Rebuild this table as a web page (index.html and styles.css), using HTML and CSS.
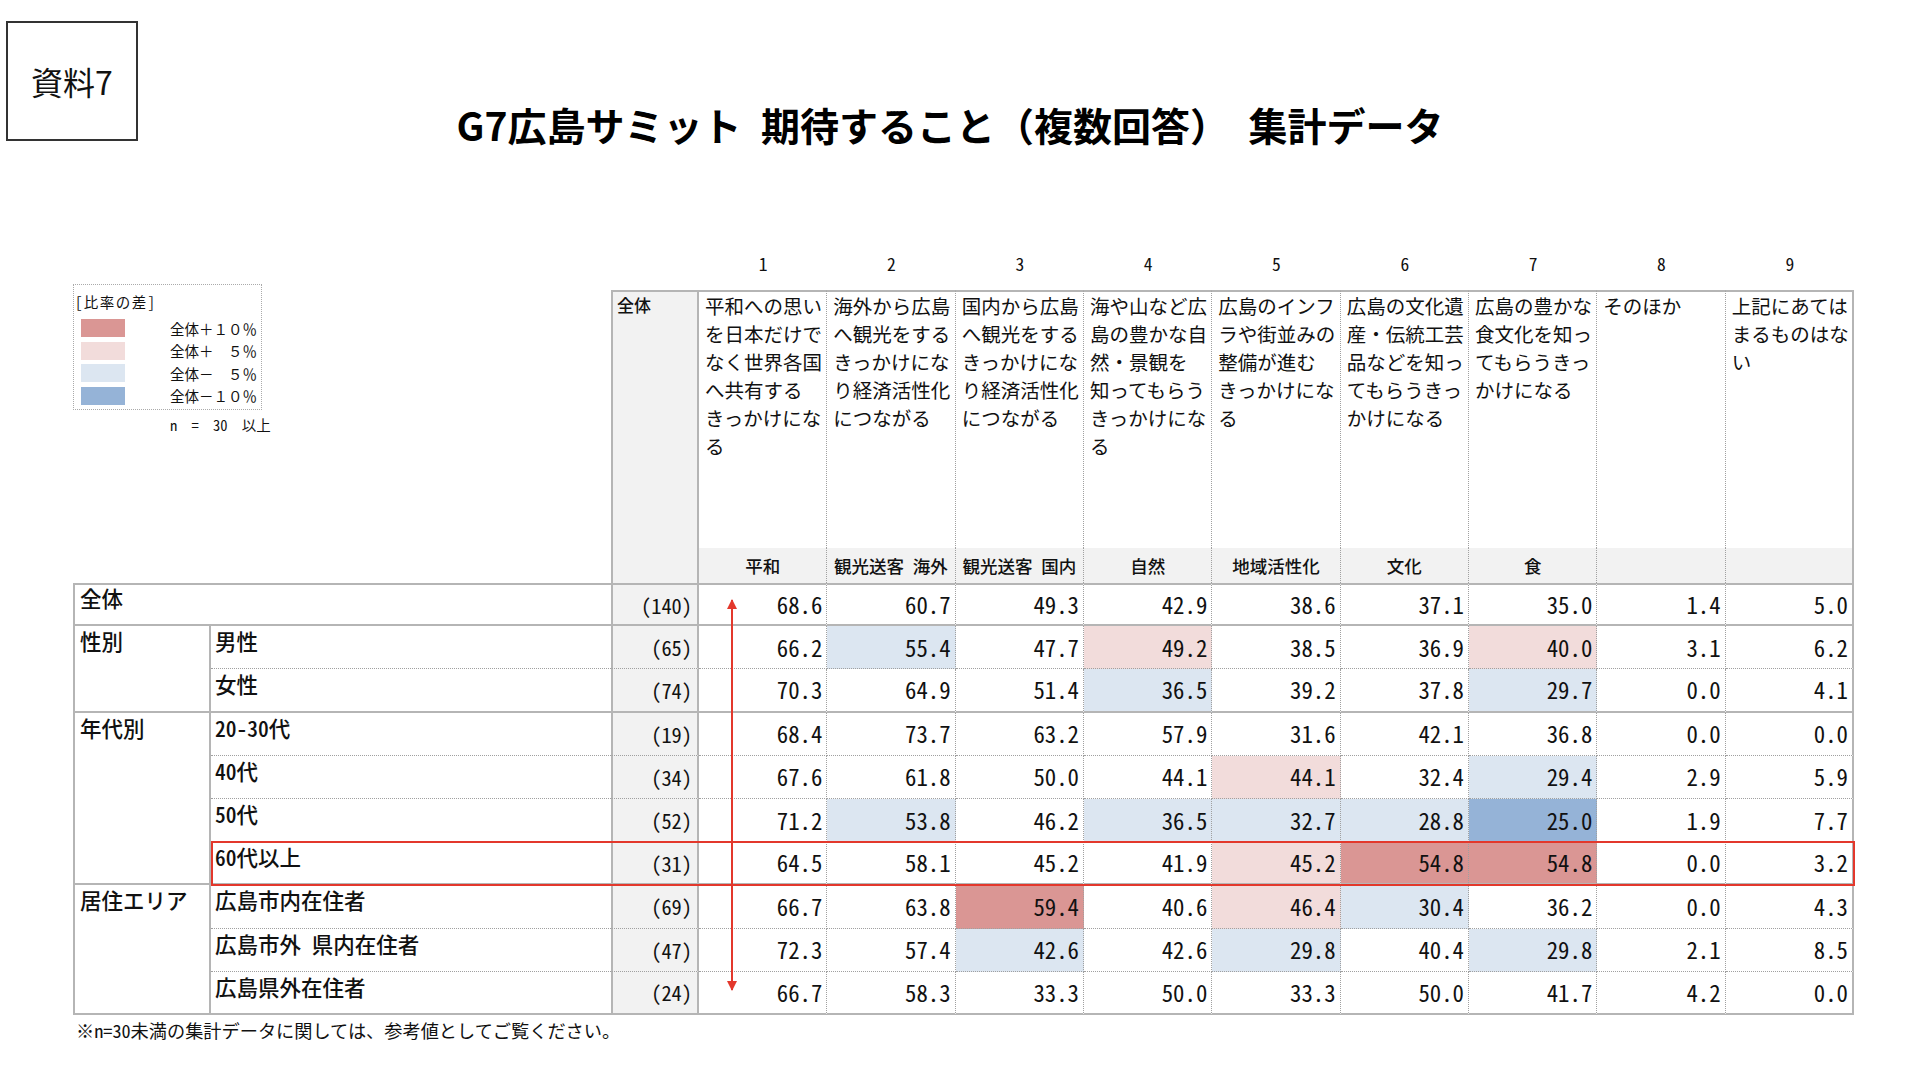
FILE: index.html
```html
<!DOCTYPE html>
<html lang="ja">
<head>
<meta charset="utf-8">
<title>G7広島サミット 期待すること（複数回答） 集計データ</title>
<link rel="stylesheet" href="styles.css">
</head>
<body>
<header class="top">
  <div class="doc-tag">資料7</div>
  <h1 class="title">G7広島サミット&ensp;期待すること（複数回答）&ensp;集計データ</h1>
</header>

<div class="sheet">
  <div class="legend-area">
    <div class="legend">
      <div class="legend-title">[比率の差]</div>
      <ul class="legend-list">
        <li><span class="sw p10"></span>全体＋１０％</li>
        <li><span class="sw p5"></span>全体＋　５％</li>
        <li><span class="sw m5"></span>全体－　５％</li>
        <li><span class="sw m10"></span>全体－１０％</li>
      </ul>
    </div>
    <div class="legend-n">n = 30 以上</div>
  </div>
  <div class="blank"></div>
  <div class="num">1</div><div class="num">2</div><div class="num">3</div><div class="num">4</div><div class="num">5</div><div class="num">6</div><div class="num">7</div><div class="num">8</div><div class="num">9</div>

  <div class="h-total">全体</div>
  <div class="hq">平和への思い<br>を日本だけで<br>なく世界各国<br>へ共有する<br>きっかけにな<br>る</div>
  <div class="hq">海外から広島<br>へ観光をする<br>きっかけにな<br>り経済活性化<br>につながる</div>
  <div class="hq">国内から広島<br>へ観光をする<br>きっかけにな<br>り経済活性化<br>につながる</div>
  <div class="hq">海や山など広<br>島の豊かな自<br>然・景観を<br>知ってもらう<br>きっかけにな<br>る</div>
  <div class="hq">広島のインフ<br>ラや街並みの<br>整備が進む<br>きっかけにな<br>る</div>
  <div class="hq">広島の文化遺<br>産・伝統工芸<br>品などを知っ<br>てもらうきっ<br>かけになる</div>
  <div class="hq">広島の豊かな<br>食文化を知っ<br>てもらうきっ<br>かけになる</div>
  <div class="hq">そのほか</div>
  <div class="hq last">上記にあては<br>まるものはな<br>い</div>

  <div class="hs">平和</div>
  <div class="hs">観光送客&ensp;海外</div>
  <div class="hs">観光送客&ensp;国内</div>
  <div class="hs">自然</div>
  <div class="hs">地域活性化</div>
  <div class="hs">文化</div>
  <div class="hs">食</div>
  <div class="hs"></div>
  <div class="hs last"></div>

  <div class="row first end">
    <div class="lbl all">全体</div><div class="n">(140)</div>
    <div class="v">68.6</div><div class="v">60.7</div><div class="v">49.3</div><div class="v">42.9</div><div class="v">38.6</div><div class="v">37.1</div><div class="v">35.0</div><div class="v">1.4</div><div class="v">5.0</div>
  </div>

  <div class="row">
    <div class="cat s2">性別</div><div class="lbl">男性</div><div class="n">(65)</div>
    <div class="v">66.2</div><div class="v m5">55.4</div><div class="v">47.7</div><div class="v p5">49.2</div><div class="v">38.5</div><div class="v">36.9</div><div class="v p5">40.0</div><div class="v">3.1</div><div class="v">6.2</div>
  </div>
  <div class="row end">
    <div class="lbl">女性</div><div class="n">(74)</div>
    <div class="v">70.3</div><div class="v">64.9</div><div class="v">51.4</div><div class="v m5">36.5</div><div class="v">39.2</div><div class="v">37.8</div><div class="v m5">29.7</div><div class="v">0.0</div><div class="v">4.1</div>
  </div>

  <div class="row">
    <div class="cat s4">年代別</div><div class="lbl">20-30代</div><div class="n">(19)</div>
    <div class="v">68.4</div><div class="v">73.7</div><div class="v">63.2</div><div class="v">57.9</div><div class="v">31.6</div><div class="v">42.1</div><div class="v">36.8</div><div class="v">0.0</div><div class="v">0.0</div>
  </div>
  <div class="row">
    <div class="lbl">40代</div><div class="n">(34)</div>
    <div class="v">67.6</div><div class="v">61.8</div><div class="v">50.0</div><div class="v">44.1</div><div class="v p5">44.1</div><div class="v">32.4</div><div class="v m5">29.4</div><div class="v">2.9</div><div class="v">5.9</div>
  </div>
  <div class="row">
    <div class="lbl">50代</div><div class="n">(52)</div>
    <div class="v">71.2</div><div class="v m5">53.8</div><div class="v">46.2</div><div class="v m5">36.5</div><div class="v m5">32.7</div><div class="v m5">28.8</div><div class="v m10">25.0</div><div class="v">1.9</div><div class="v">7.7</div>
  </div>
  <div class="row end">
    <div class="lbl">60代以上</div><div class="n">(31)</div>
    <div class="v">64.5</div><div class="v">58.1</div><div class="v">45.2</div><div class="v">41.9</div><div class="v p5">45.2</div><div class="v p10">54.8</div><div class="v p10">54.8</div><div class="v">0.0</div><div class="v">3.2</div>
  </div>

  <div class="row">
    <div class="cat s3">居住エリア</div><div class="lbl">広島市内在住者</div><div class="n">(69)</div>
    <div class="v">66.7</div><div class="v">63.8</div><div class="v p10">59.4</div><div class="v">40.6</div><div class="v p5">46.4</div><div class="v m5">30.4</div><div class="v">36.2</div><div class="v">0.0</div><div class="v">4.3</div>
  </div>
  <div class="row">
    <div class="lbl">広島市外　県内在住者</div><div class="n">(47)</div>
    <div class="v">72.3</div><div class="v">57.4</div><div class="v m5">42.6</div><div class="v">42.6</div><div class="v m5">29.8</div><div class="v">40.4</div><div class="v m5">29.8</div><div class="v">2.1</div><div class="v">8.5</div>
  </div>
  <div class="row end">
    <div class="lbl">広島県外在住者</div><div class="n">(24)</div>
    <div class="v">66.7</div><div class="v">58.3</div><div class="v">33.3</div><div class="v">50.0</div><div class="v">33.3</div><div class="v">50.0</div><div class="v">41.7</div><div class="v">4.2</div><div class="v">0.0</div>
  </div>

  <div class="hl"></div>
  <div class="arrow"></div>
</div>

<p class="note">※n=30未満の集計データに関しては、参考値としてご覧ください。</p>
</body>
</html>
```

FILE: styles.css
```css
:root {
  --solid: 2px solid #b5b5b5;
  --dot: 1px dotted #a0a0a0;
  --gray: #f2f2f2;
  --jp: "Noto Sans CJK JP", "Noto Sans", sans-serif;
  --mono: "Noto Sans Mono CJK JP", "Noto Sans CJK JP", monospace;
}

html, body {
  margin: 0;
  background: #fff;
}

body {
  width: 1920px;
  height: 1080px;
  overflow: hidden;
  color: #111;
  font-family: var(--jp);
}

/* ---------- top ---------- */
.top {
  display: flex;
  align-items: flex-start;
  height: 250px;
  box-sizing: border-box;
  padding: 21px 0 0 6px;
}

.doc-tag {
  width: 132px;
  height: 120px;
  box-sizing: border-box;
  border: 2px solid #333;
  display: flex;
  align-items: center;
  justify-content: center;
  font-size: 32px;
  font-weight: 400;
}

.title {
  width: 1624px;
  margin: 79px 0 0;
  text-align: center;
  font-size: 39px;
  line-height: 48px;
  font-weight: 700;
  color: #000;
  white-space: nowrap;
}

/* ---------- sheet grid ---------- */
.sheet {
  position: relative;
  display: grid;
  margin-left: 73px;
  width: 1781px;
  grid-template-columns: 138px 400px 88px repeat(9, 128.333px);
  grid-template-rows: 40px 258px 35px repeat(10, 43.2px);
}

.sheet > div,
.row > div {
  box-sizing: border-box;
  min-width: 0;
}

.row {
  display: contents;
}

/* legend */
.legend-area {
  grid-column: span 2;
  grid-row: span 3;
  padding-top: 34px;
}

.legend {
  width: 189px;
  box-sizing: border-box;
  border: 1px dotted #aaa;
  padding: 8px 0 2px 1px;
  font-size: 14.5px;
}

.legend-title {
  line-height: 18px;
  letter-spacing: 1.5px;
  font-feature-settings: "hwid" 1;
}

.legend-list {
  list-style: none;
  margin: 6px 0 0;
  padding: 0 0 0 6px;
}

.legend-list li {
  display: flex;
  align-items: center;
  height: 22.5px;
}

.sw {
  width: 44px;
  height: 18px;
  margin-right: 45px;
}

.legend-n {
  margin: 6px 0 0 97px;
  font-size: 14.5px;
  line-height: 18px;
  word-spacing: 7px;
  font-feature-settings: "hwid" 1;
}

/* colour scale */
.p10 { background: #da9694; }
.p5 { background: #f2dcdb; }
.m5 { background: #dce6f1; }
.m10 { background: #95b3d7; }

/* header rows */
.num {
  text-align: center;
  padding-top: 3px;
  font-family: var(--mono);
  font-feature-settings: "hwid" 1;
  font-size: 17.5px;
  line-height: 22px;
}

.h-total {
  grid-row: span 2;
  background: var(--gray);
  border-top: var(--solid);
  border-left: var(--solid);
  border-right: var(--solid);
  padding: 2px 4px;
  font-size: 17px;
  line-height: 22px;
  font-weight: 500;
}

.hq {
  border-top: var(--solid);
  border-right: var(--dot);
  padding: 0 2px 0 6px;
  font-size: 19.5px;
  line-height: 27.9px;
  white-space: nowrap;
}

.hs {
  background: var(--gray);
  border-right: var(--dot);
  text-align: center;
  font-size: 17.5px;
  line-height: 35px;
  font-weight: 500;
  white-space: nowrap;
}

.hq.last,
.hs.last {
  border-right: var(--solid);
}

/* body rows */
.cat,
.lbl {
  padding: 2px 5px 0;
  font-size: 21.5px;
  line-height: 26px;
  font-weight: 500;
  white-space: nowrap;
  font-feature-settings: "hwid" 1;
}

.cat {
  border-left: var(--solid);
  border-right: var(--solid);
}

.cat.s2 { grid-row: span 2; }
.cat.s3 { grid-row: span 3; }
.cat.s4 { grid-row: span 4; }

.lbl {
  padding-left: 4px;
  border-bottom: var(--dot);
}

.lbl.all {
  grid-column: span 2;
  border-left: var(--solid);
  padding-left: 5px;
}

.n,
.v {
  display: flex;
  align-items: center;
  justify-content: flex-end;
  font-family: var(--mono);
  font-feature-settings: "hwid" 1;
  border-bottom: var(--dot);
  white-space: nowrap;
}

.n {
  background: var(--gray);
  border-left: var(--solid);
  border-right: var(--solid);
  padding-right: 5px;
  font-size: 20.4px;
}

.v {
  border-right: var(--dot);
  padding-right: 4px;
  font-size: 22.8px;
}

.row > div:last-child {
  border-right: var(--solid);
}

.row.first > div {
  border-top: var(--solid);
}

.row.first > .lbl {
  padding-top: 0;
}

.row.end > div,
.sheet .row > .cat {
  border-bottom: var(--solid);
}

/* annotations drawn over the table */
.hl {
  position: absolute;
  grid-row: 10 / 11;
  grid-column: 2 / -1;
  top: -1px;
  bottom: -1px;
  left: 0;
  right: -1px;
  border: 2px solid #e3382c;
  pointer-events: none;
}

.arrow {
  position: absolute;
  grid-column: 4 / 5;
  grid-row: 4 / 14;
  left: 32px;
  top: 17px;
  bottom: 25px;
  width: 2px;
  background: #e3382c;
}

.arrow::before,
.arrow::after {
  content: "";
  position: absolute;
  left: -4px;
  border-left: 5px solid transparent;
  border-right: 5px solid transparent;
}

.arrow::before {
  top: -1px;
  border-bottom: 10px solid #e3382c;
}

.arrow::after {
  bottom: -1px;
  border-top: 10px solid #e3382c;
}

/* footnote */
.note {
  margin: 4px 0 0 76px;
  font-size: 18.2px;
  line-height: 22px;
  font-feature-settings: "hwid" 1;
}
```
